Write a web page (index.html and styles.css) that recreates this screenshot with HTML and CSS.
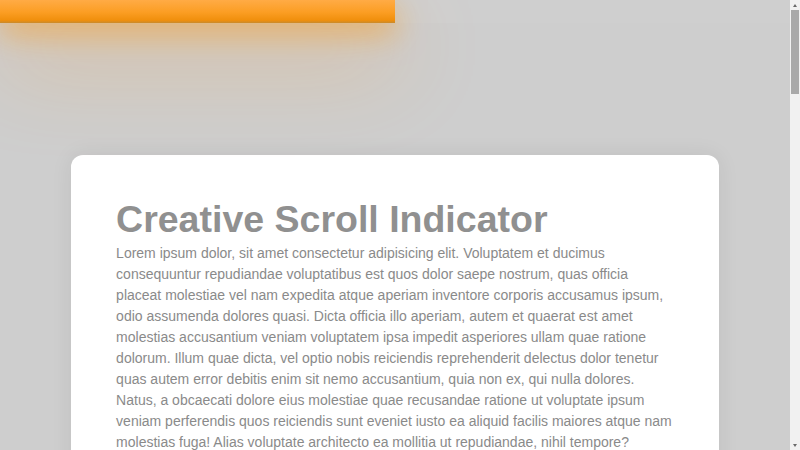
FILE: index.html
```html
<!DOCTYPE html>
<html lang="en">
<head>
<meta charset="utf-8">
<title>Creative Scroll Indicator</title>
<link rel="stylesheet" href="styles.css">
</head>
<body>
  <div class="viewport">
    <header class="progress-track">
      <div class="progress-bar" style="width: 50%"></div>
    </header>

    <main class="page">
      <article class="card">
        <h1 class="card-title">Creative Scroll Indicator</h1>
        <p class="card-text">Lorem ipsum dolor, sit amet consectetur adipisicing elit. Voluptatem et ducimus consequuntur repudiandae voluptatibus est quos dolor saepe nostrum, quas officia placeat molestiae vel nam expedita atque aperiam inventore corporis accusamus ipsum, odio assumenda dolores quasi. Dicta officia illo aperiam, autem et quaerat est amet molestias accusantium veniam voluptatem ipsa impedit asperiores ullam quae ratione dolorum. Illum quae dicta, vel optio nobis reiciendis reprehenderit delectus dolor tenetur quas autem error debitis enim sit nemo accusantium, quia non ex, qui nulla dolores. Natus, a obcaecati dolore eius molestiae quae recusandae ratione ut voluptate ipsum veniam perferendis quos reiciendis sunt eveniet iusto ea aliquid facilis maiores atque nam molestias fuga! Alias voluptate architecto ea mollitia ut repudiandae, nihil tempore?</p>
        <p class="card-text">Lorem ipsum dolor, sit amet consectetur adipisicing elit. Voluptatem et ducimus consequuntur repudiandae voluptatibus est quos dolor saepe nostrum, quas officia placeat molestiae vel nam expedita atque aperiam inventore corporis accusamus ipsum, odio assumenda dolores quasi. Dicta officia illo aperiam, autem et quaerat est amet molestias accusantium veniam voluptatem ipsa impedit asperiores ullam quae ratione dolorum. Illum quae dicta, vel optio nobis reiciendis reprehenderit delectus dolor tenetur quas autem error debitis enim sit nemo accusantium, quia non ex, qui nulla dolores. Natus, a obcaecati dolore eius molestiae quae recusandae ratione ut voluptate ipsum veniam perferendis quos reiciendis sunt eveniet iusto ea aliquid facilis maiores atque nam molestias fuga! Alias voluptate architecto ea mollitia ut repudiandae, nihil tempore?</p>
        <p class="card-text">Lorem ipsum dolor, sit amet consectetur adipisicing elit. Voluptatem et ducimus consequuntur repudiandae voluptatibus est quos dolor saepe nostrum, quas officia placeat molestiae vel nam expedita atque aperiam inventore corporis accusamus ipsum, odio assumenda dolores quasi. Dicta officia illo aperiam, autem et quaerat est amet molestias accusantium veniam voluptatem ipsa impedit asperiores ullam quae ratione dolorum. Illum quae dicta, vel optio nobis reiciendis reprehenderit delectus dolor tenetur quas autem error debitis enim sit nemo accusantium, quia non ex, qui nulla dolores. Natus, a obcaecati dolore eius molestiae quae recusandae ratione ut voluptate ipsum veniam perferendis quos reiciendis sunt eveniet iusto ea aliquid facilis maiores atque nam molestias fuga! Alias voluptate architecto ea mollitia ut repudiandae, nihil tempore?</p>
        <p class="card-text">Lorem ipsum dolor, sit amet consectetur adipisicing elit. Voluptatem et ducimus consequuntur repudiandae voluptatibus est quos dolor saepe nostrum, quas officia placeat molestiae vel nam expedita atque aperiam inventore corporis accusamus ipsum, odio assumenda dolores quasi. Dicta officia illo aperiam, autem et quaerat est amet molestias accusantium veniam voluptatem ipsa impedit asperiores ullam quae ratione dolorum. Illum quae dicta, vel optio nobis reiciendis reprehenderit delectus dolor tenetur quas autem error debitis enim sit nemo accusantium, quia non ex, qui nulla dolores. Natus, a obcaecati dolore eius molestiae quae recusandae ratione ut voluptate ipsum veniam perferendis quos reiciendis sunt eveniet iusto ea aliquid facilis maiores atque nam molestias fuga! Alias voluptate architecto ea mollitia ut repudiandae, nihil tempore?</p>
      </article>
    </main>
  </div>

  <div class="scrollbar" aria-hidden="true">
    <span class="scrollbar-button scrollbar-button--up"></span>
    <span class="scrollbar-rail">
      <span class="scrollbar-thumb"></span>
    </span>
    <span class="scrollbar-button scrollbar-button--down"></span>
  </div>
</body>
</html>
```

FILE: styles.css
```css
/* Base page */
html,
body {
  height: 100%;
}

body {
  margin: 0;
  display: flex;
  overflow: hidden;
  background: #cecece;
  font-family: "Liberation Sans", Arial, sans-serif;
  color: #888888;
}

/* Scrolling area, leaves room for the slim scrollbar rail */
.viewport {
  flex: 1;
  min-width: 0;
  overflow-y: auto;
  scrollbar-width: none;
}

/* Slim scrollbar rail */
.scrollbar {
  width: 10px;
  flex: none;
  display: flex;
  flex-direction: column;
  background: #f1f1f1;
}

.scrollbar-button {
  height: 10px;
  flex: none;
  display: flex;
  align-items: center;
  justify-content: center;
}

.scrollbar-button::before {
  content: "";
  width: 0;
  height: 0;
  border-left: 2.5px solid transparent;
  border-right: 2.5px solid transparent;
}

.scrollbar-button--up::before {
  border-bottom: 3px solid #6a6a6a;
}

.scrollbar-button--down::before {
  border-top: 3px solid #6a6a6a;
}

.scrollbar-rail {
  flex: 1;
  display: flex;
  flex-direction: column;
  padding: 0 1px;
}

.scrollbar-thumb {
  height: 84px;
  background: #a9a9a9;
}

/* Scroll progress indicator pinned to the top */
.progress-track {
  position: fixed;
  top: 0;
  left: 0;
  right: 10px;
  height: 23px;
  z-index: 10;
  background: rgba(255, 255, 255, 0.04);
}

.progress-bar {
  height: 100%;
  background: linear-gradient(to bottom, #ffab45 0%, #fb9d22 55%, #f08f0c 88%, #c98a2c 100%);
  box-shadow:
    0 10px 30px rgba(255, 150, 10, 0.55),
    0 34px 90px rgba(255, 145, 0, 0.45);
}

/* Content */
.page {
  padding: 155px 0 190px;
}

.card {
  width: 82%;
  margin: 0 auto;
  box-sizing: border-box;
  padding: 43px 45px;
  background: #ffffff;
  border-radius: 12px;
  box-shadow: 0 0 22px rgba(0, 0, 0, 0.07);
}

.card-title {
  margin: 0 0 2px;
  font-size: 37.5px;
  line-height: 43px;
  font-weight: 700;
  color: #909090;
}

.card-text {
  margin: 0 0 21px;
  font-size: 14px;
  line-height: 21px;
  color: #8a8a8a;
}

.card-text:last-child {
  margin-bottom: 0;
}
```
